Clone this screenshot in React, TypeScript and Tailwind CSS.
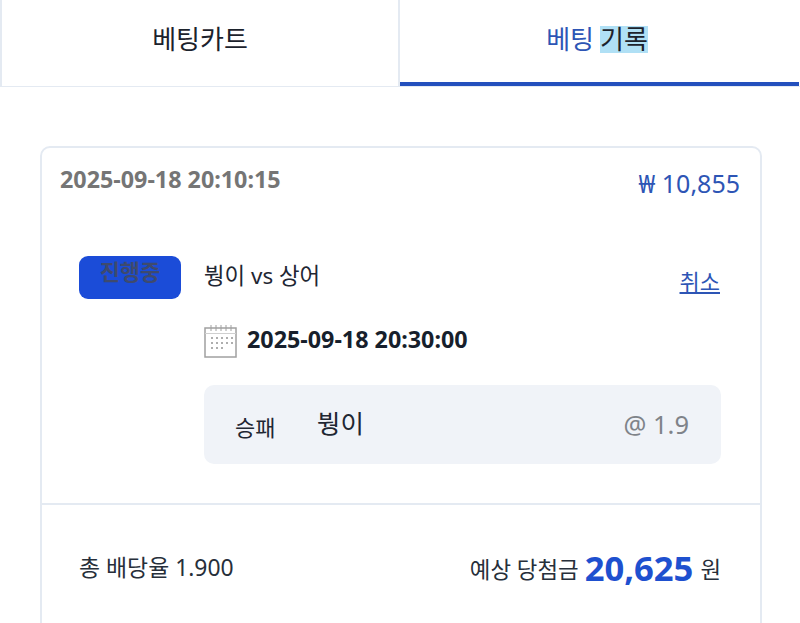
const font = "font-['Noto_Sans','Noto_Sans_CJK_KR',sans-serif]";

const CalendarIcon = () => (
  <svg width="34" height="34" viewBox="0 0 34 34" fill="none" className="mt-[2px] shrink-0">
    <rect x="1" y="4" width="31" height="29" stroke="#a0a0a0" strokeWidth="1.5" />
    <path d="M1 9.5H32" stroke="#d0d0d0" strokeWidth="1" />
    <path d="M7 1V7M12 1V7M17 1V7M22 1V7M27 1V7" stroke="#a0a0a0" strokeWidth="1" />
    <path
      d="M7 14h2M12 14h2M17 14h2M22 14h2M27 14h2M7 19h2M12 19h2M17 19h2M22 19h2M27 19h2M7 24h2M12 24h2M17 24h2"
      stroke="#aeaeae"
      strokeWidth="2"
    />
  </svg>
);

export default function App() {
  return (
    <div className={`${font} h-[623px] w-[800px] overflow-hidden bg-white text-[#1f2733]`}>
      {/* Tabs */}
      <div className="flex h-[87px] border-b border-[#e4eaf2]">
        <div className="flex w-[400px] items-center justify-center border-x-2 border-[#e4eaf2] pb-[8px] text-[26px] text-[#1c222c]">
          베팅카트
        </div>
        <div className="flex w-[399px] items-center justify-center border-b-4 border-[#2350bd] pb-[4px] pr-[5px] text-[26px] text-[#2d55b5]">
          베팅 <span className="ml-[6px] inline-block bg-[#b0e0f5] leading-[27px] text-[#1c222c]">기록</span>
        </div>
      </div>

      {/* Card */}
      <div className="ml-10 mt-[59px] h-[560px] w-[722px] rounded-[10px] border-2 border-[#e4eaf2]">
        <div className="flex justify-between pl-[18px] pr-5 pt-[15px]">
          <span className="text-[23.3px] font-bold leading-[32px] text-[#757575]">2025-09-18 20:10:15</span>
          <span className="mt-[3px] text-[25px] leading-[34px] text-[#2d55b5]">₩ 10,855</span>
        </div>

        <div className="flex pl-[37px] pr-[39px] pt-[56px]">
          <div className="h-[43px] w-[102px] rounded-[9px] bg-[#1b4cd8] text-center text-[22px] font-semibold leading-[30px] text-[#3e4a6e]">
            진행중
          </div>
          <div className="ml-[23px] flex-1">
            <div className="flex items-start justify-between">
              <span className="text-[22.4px] leading-[40px] text-[#1f2733]">붱이 vs 상어</span>
              <a className="mr-[1px] mt-[6px] text-[22px] leading-[38px] text-[#2d55b5] underline">취소</a>
            </div>
            <div className="mt-[22px] flex items-start gap-[9px]">
              <CalendarIcon />
              <span className="text-[23.3px] font-bold leading-[34px] text-[#171f2c]">2025-09-18 20:30:00</span>
            </div>
            <div className="mt-[27px] flex h-[79px] items-center rounded-[10px] bg-[#f0f3f8] pl-[31px] pr-[32px]">
              <span className="mt-[5px] w-[82px] text-[22px] text-[#1f2733]">승패</span>
              <span className="mb-[3px] text-[25.5px] text-[#1f2733]">붱이</span>
              <span className="ml-auto text-[25.5px] text-[#7f8389]">@ 1.9</span>
            </div>
          </div>
        </div>

        <div className="mt-[39px] border-t-2 border-[#e4eaf2]" />

        <div className="flex items-center justify-between pl-[37px] pr-[39px] pt-[45px]">
          <span className="text-[22.9px] leading-[32px] text-[#272f3a]">총 배당율 1.900</span>
          <span className="flex items-center text-[22.4px] text-[#272f3a]">
            <span className="mt-[3px]">예상 당첨금</span>
            <b className="ml-[6px] mr-[7px] text-[34.6px] font-bold leading-[32px] text-[#1e50cf]">20,625</b>
            <span className="mt-[3px]">원</span>
          </span>
        </div>
      </div>
    </div>
  );
}
